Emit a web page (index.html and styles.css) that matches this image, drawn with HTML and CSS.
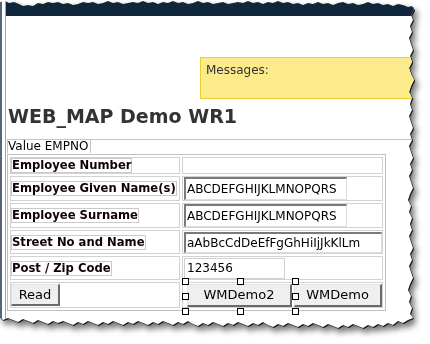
FILE: index.html
```html
<!DOCTYPE html>
<html lang="en">
<head>
  <meta charset="UTF-8" />
  <title>WEB_MAP Demo WR1</title>
  <link rel="stylesheet" href="styles.css">
</head>
<body>
  <div class="page">
    <div class="sheet">
      <div class="edge"></div>
      <div class="window">
        <div class="titlebar"></div>
        <div class="content">
          <div class="messages">Messages:</div>
          <h1 class="title">WEB_MAP Demo WR1</h1>
          <div class="panel">
            <div class="caption">Value EMPNO</div>
            <table class="form">
              <tr class="r1">
                <td class="lbl"><span>Employee Number</span></td>
                <td class="fld"></td>
              </tr>
              <tr class="r2">
                <td class="lbl"><span>Employee Given Name(s)</span></td>
                <td class="fld"><input class="w-long" value="ABCDEFGHIJKLMNOPQRS"></td>
              </tr>
              <tr class="r2">
                <td class="lbl"><span>Employee Surname</span></td>
                <td class="fld"><input class="w-long" value="ABCDEFGHIJKLMNOPQRS"></td>
              </tr>
              <tr class="r3">
                <td class="lbl"><span>Street No and Name</span></td>
                <td class="fld"><input class="w-full" value="aAbBcCdDeEfFgGhHiIjJkKlLm"></td>
              </tr>
              <tr class="r3">
                <td class="lbl"><span>Post / Zip Code</span></td>
                <td class="fld"><input class="w-short light" value="123456"></td>
              </tr>
              <tr class="r4">
                <td class="lbl"><button class="btn read">Read</button></td>
                <td class="fld">
                  <div class="actions">
                    <div class="picked">
                      <button class="btn demo2">WMDemo2</button>
                      <div class="sel">
                        <i class="h tl"></i><i class="h tm"></i><i class="h tr"></i>
                        <i class="h ml"></i><i class="h mr"></i>
                        <i class="h bl"></i><i class="h bm"></i><i class="h br"></i>
                      </div>
                    </div>
                    <button class="btn demo">WMDemo</button>
                  </div>
                </td>
              </tr>
            </table>
          </div>
        </div>
      </div>
    </div>
  </div>
</body>
</html>
```

FILE: styles.css
```css
* {
  margin: 0;
  padding: 0;
  box-sizing: border-box;
}
body {
  background: #ffffff;
  font-family: "DejaVu Sans", Verdana, sans-serif;
  font-size: 12px;
  color: #000;
  overflow: hidden;
}
/* torn paper look */
.page {
  width: 430px;
  height: 344px;
  filter: drop-shadow(1px 1px 0 #1a1a1a) drop-shadow(3px 4px 3px rgba(0, 0, 0, 0.55));
}
.sheet {
  width: 416px;
  height: 332px;
  display: flex;
  background: #fff;
  clip-path: polygon(
    0 2px, 5px 1px, 9px 3px, 14px 2px, 19px 4px, 23px 6px, 28px 5px, 33px 6px, 38px 3px, 43px 4px,
    48px 2px, 53px 3px, 58px 2px, 63px 4px, 68px 3px, 73px 5px, 78px 4px, 83px 2px, 88px 3px, 93px 2px,
    98px 4px, 103px 3px, 108px 1px, 113px 3px, 118px 2px, 123px 4px, 128px 3px, 133px 2px, 138px 3px, 143px 1px,
    148px 3px, 153px 2px, 158px 4px, 163px 2px, 168px 3px, 173px 1px, 178px 3px, 183px 2px, 188px 4px, 193px 3px,
    198px 1px, 203px 3px, 208px 2px, 213px 4px, 218px 3px, 223px 2px, 228px 4px, 233px 3px, 238px 2px, 243px 3px,
    248px 1px, 253px 3px, 258px 2px, 263px 4px, 268px 2px, 273px 3px, 278px 1px, 283px 3px, 288px 2px, 293px 4px,
    298px 3px, 303px 5px, 308px 3px, 313px 4px, 318px 2px, 323px 4px, 328px 3px, 333px 5px, 338px 3px, 343px 2px,
    348px 4px, 353px 3px, 358px 5px, 363px 4px, 368px 2px, 373px 4px, 378px 3px, 383px 5px, 388px 4px, 393px 6px,
    398px 4px, 403px 5px, 408px 7px, 412px 6px,
    414px 10px, 411px 15px, 413px 20px, 410px 26px, 412px 32px, 409px 38px, 411px 44px, 413px 50px, 410px 56px,
    412px 62px, 409px 68px, 411px 74px, 414px 80px, 411px 86px, 409px 92px, 412px 98px, 410px 104px, 412px 110px,
    409px 116px, 411px 122px, 413px 128px, 410px 134px, 412px 140px, 409px 146px, 411px 152px, 413px 158px,
    410px 164px, 412px 170px, 409px 176px, 411px 182px, 413px 188px, 410px 194px, 408px 200px, 411px 206px,
    409px 212px, 412px 218px, 410px 224px, 412px 230px, 409px 236px, 411px 242px, 413px 248px, 410px 254px,
    412px 260px, 409px 266px, 411px 272px, 413px 278px, 410px 284px, 408px 290px, 411px 296px, 409px 302px,
    412px 308px, 410px 314px, 413px 318px,
    408px 320px, 403px 323px, 398px 321px, 393px 325px, 388px 323px, 383px 326px, 378px 324px, 373px 327px,
    368px 325px, 363px 328px, 358px 326px, 353px 324px, 348px 327px, 343px 325px, 338px 328px, 333px 326px,
    328px 324px, 323px 327px, 318px 325px, 313px 323px, 308px 326px, 303px 324px, 298px 327px, 293px 325px,
    288px 323px, 283px 326px, 278px 324px, 273px 327px, 268px 325px, 263px 322px, 258px 325px, 253px 323px,
    248px 326px, 243px 324px, 238px 322px, 233px 325px, 228px 323px, 223px 326px, 218px 324px, 213px 322px,
    208px 325px, 203px 323px, 198px 326px, 193px 324px, 188px 321px, 183px 324px, 178px 322px, 173px 325px,
    168px 323px, 163px 321px, 158px 324px, 153px 322px, 148px 325px, 143px 323px, 138px 321px, 133px 324px,
    128px 322px, 123px 325px, 118px 323px, 113px 321px, 108px 324px, 103px 322px, 98px 325px, 93px 323px,
    88px 321px, 83px 324px, 78px 322px, 73px 325px, 68px 323px, 63px 321px, 58px 323px, 53px 321px,
    48px 324px, 43px 322px, 38px 320px, 33px 323px, 28px 321px, 23px 319px, 18px 322px, 13px 320px,
    8px 318px, 3px 320px, 0 318px
  );
}
.edge {
  width: 6px;
  flex: none;
  border-left: 2px solid #56657a;
  border-right: 1px solid #a4a4a4;
}
.window {
  flex: 1;
}
.titlebar {
  height: 16px;
  background: #10263a;
}
.messages {
  margin: 41px 0 0 194px;
  height: 42px;
  padding: 5px 5px;
  background: #fbeb8b;
  border: 1px solid #eecd2e;
  color: #333;
  line-height: 15px;
}
.title {
  margin: 5px 0 11px 2px;
  font-size: 19px;
  line-height: 24px;
  font-weight: bold;
  color: #333;
}
.panel {
  margin-left: 1px;
  border-top: 1px solid #c4c4c4;
}
.caption {
  display: inline-block;
  vertical-align: top;
  height: 13px;
  line-height: 13px;
  padding-right: 2px;
  border-left: 1px solid #c4c4c4;
  border-right: 1px solid #c4c4c4;
}
.form {
  display: table;
  table-layout: fixed;
  width: 379px;
  border: 1px solid #c0c0c0;
  border-spacing: 2px;
  border-collapse: separate;
}
.form td {
  border: 1px solid #d2d2d2;
  vertical-align: middle;
  padding: 0;
}
.lbl {
  width: 170px;
}
.fld {
  width: 201px;
}
.r1 td { height: 16px; }
.r2 td { height: 25px; }
.r3 td { height: 24px; }
.r4 td { height: 26px; }
.lbl span {
  display: block;
  width: max-content;
  border: 1px solid #cacaca;
  font-size: 11.6px;
  font-weight: bold;
  line-height: 13px;
  color: #100;
}
.fld input {
  display: block;
  margin-left: 1px;
  padding: 0 1px;
  font-family: "DejaVu Sans", Verdana, sans-serif;
  font-size: 12px;
  color: #000;
  background: #fff;
  border-top: 2px solid #7a7a7a;
  border-left: 2px solid #7a7a7a;
  border-right: 1px solid #dedede;
  border-bottom: 1px solid #dedede;
  outline: none;
}
.w-long { width: 163px; height: 23px; }
.w-full { width: 198px; height: 21px; }
.w-short { width: 101px; height: 21px; }
.fld input.light {
  border: 1px solid #d0d0d0;
  padding-left: 2px;
}
.btn {
  display: block;
  height: 22px;
  font-family: "DejaVu Sans", Verdana, sans-serif;
  font-size: 13px;
  color: #000;
  background: #efefef;
  border: 1px solid;
  border-color: #e2e2e2 #6a6a6a #6a6a6a #e2e2e2;
  border-width: 1px 2px 2px 1px;
}
.read {
  width: 49px;
}
.actions {
  display: flex;
  gap: 2px;
  padding-left: 4px;
}
.picked {
  position: relative;
}
.demo2 {
  width: 105px;
  height: 23px;
}
.demo {
  width: 90px;
  height: 23px;
}
/* designer selection handles */
.sel {
  position: absolute;
  left: -2px;
  top: -3px;
  width: 110px;
  height: 30px;
  z-index: 1;
}
.h {
  position: absolute;
  width: 7px;
  height: 7px;
  margin: -3px 0 0 -3px;
  background: #fff;
  border: 1px solid #000;
}
.tl { left: 0; top: 0; }
.tm { left: 50%; top: 0; }
.tr { left: 100%; top: 0; }
.ml { left: 0; top: 50%; }
.mr { left: 100%; top: 50%; }
.bl { left: 0; top: 100%; }
.bm { left: 50%; top: 100%; }
.br { left: 100%; top: 100%; }
```
